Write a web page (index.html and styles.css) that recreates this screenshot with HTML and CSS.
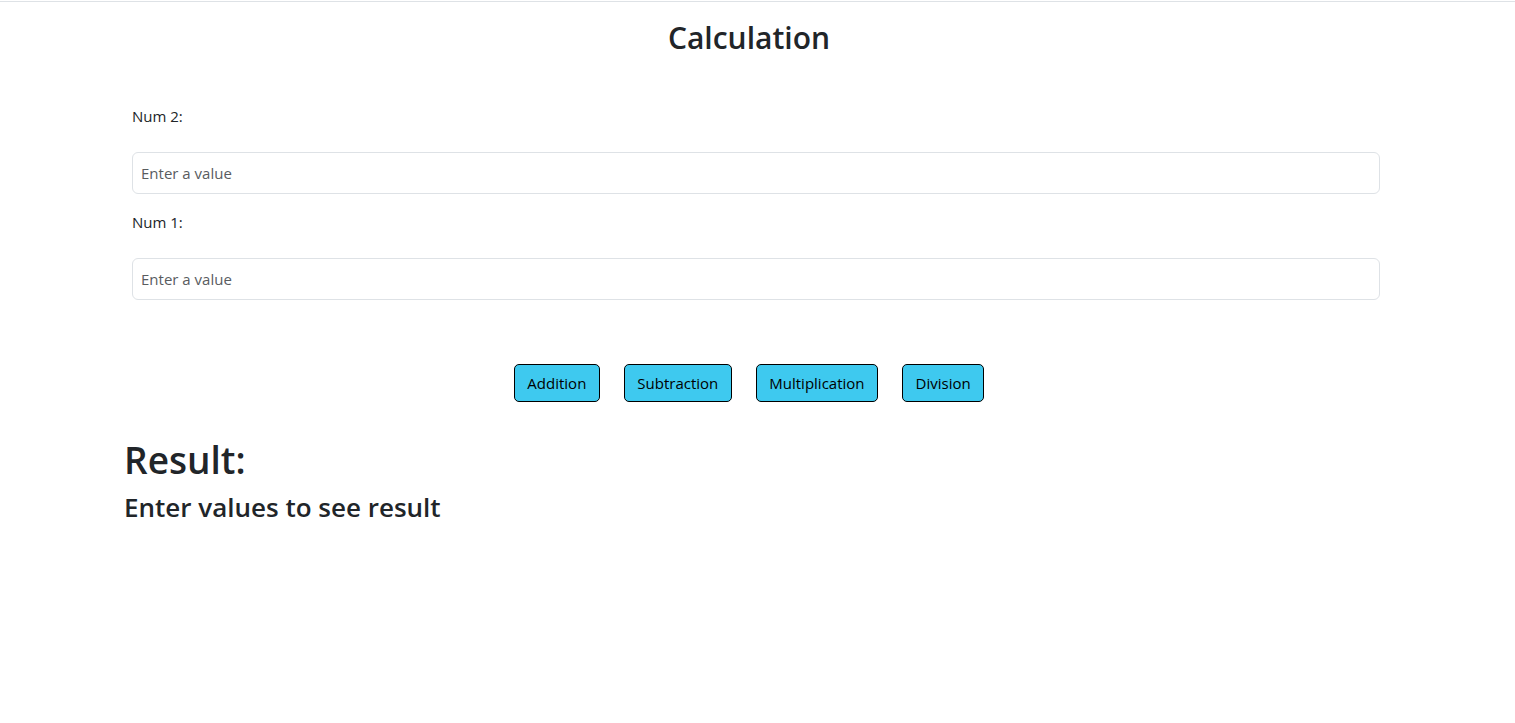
FILE: index.html
```html
<!DOCTYPE html>
<html lang="en">
<head>
<meta charset="utf-8">
<title>Calculation</title>
<link rel="stylesheet" href="styles.css">
</head>
<body>
<div class="topline"></div>
<main class="page">
  <h2 class="title">Calculation</h2>
  <form class="fields">
    <label class="field-label" for="num2">Num 2:</label>
    <input class="field-input" id="num2" type="text" placeholder="Enter a value">
    <label class="field-label" for="num1">Num 1:</label>
    <input class="field-input" id="num1" type="text" placeholder="Enter a value">
  </form>
  <div class="actions">
    <button class="op-btn" type="button">Addition</button>
    <button class="op-btn" type="button">Subtraction</button>
    <button class="op-btn" type="button">Multiplication</button>
    <button class="op-btn" type="button">Division</button>
  </div>
  <section class="result">
    <h1 class="result-title">Result:</h1>
    <h4 class="result-text">Enter values to see result</h4>
  </section>
</main>
</body>
</html>
```
FILE: styles.css
```css
html, body {
  margin: 0;
  padding: 0;
  background: #fff;
}
body {
  font-family: "Open Sans", "Noto Sans", sans-serif;
  color: #212529;
  font-size: 16px;
  line-height: 1.5;
}
.topline {
  margin-top: 1px;
  height: 1px;
  background: #dee2e6;
}
.page {
  width: 1498px;
  display: flex;
  flex-direction: column;
}
.title {
  margin: 17px 0 0 0;
  height: 38px;
  text-align: center;
  font-size: 30px;
  font-weight: 600;
  line-height: 38px;
}
.fields {
  width: 1248px;
  margin: 47px 0 0 132px;
  display: flex;
  flex-direction: column;
}
.field-label {
  font-size: 15px;
  line-height: 24px;
  margin-bottom: 24px;
}
.field-input {
  box-sizing: border-box;
  height: 42px;
  border: 1px solid #dee2e6;
  border-radius: 6px;
  padding: 0 8px;
  font-family: inherit;
  font-size: 15px;
  color: #212529;
  margin-bottom: 16px;
  outline: none;
}
.field-input::placeholder {
  color: #595c5f;
}
.actions {
  margin-top: 48px;
  display: flex;
  justify-content: center;
  gap: 24px;
}
.op-btn {
  height: 38px;
  padding: 0 12.5px;
  background: #3ec9ef;
  border: 1px solid #000;
  border-radius: 5px;
  font-family: inherit;
  font-size: 15px;
  color: #000;
}
.result {
  margin: 34px 0 0 124px;
}
.result-title {
  margin: 0;
  font-size: 37px;
  font-weight: 600;
  line-height: 48px;
}
.result-text {
  margin: 8px 0 0 0;
  font-size: 26px;
  font-weight: 600;
  line-height: 30px;
}
```
